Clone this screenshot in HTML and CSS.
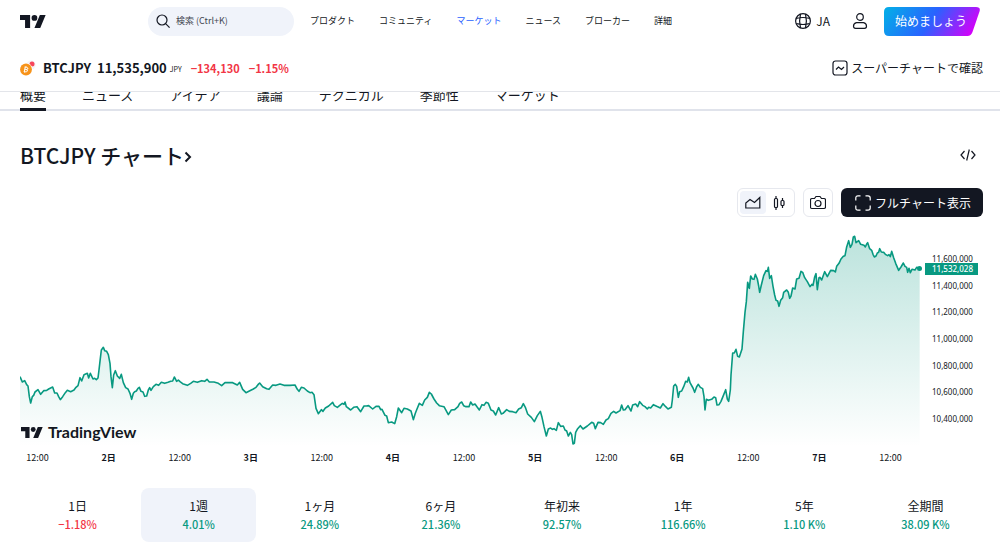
FILE: index.html
```html
<!DOCTYPE html>
<html lang="ja">
<head>
<meta charset="utf-8">
<meta name="viewport" content="width=device-width, initial-scale=1">
<title>BTCJPY チャート — TradingView</title>
<link rel="stylesheet" href="styles.css">
</head>
<body>
<svg class="sprite" aria-hidden="true">
  <symbol id="tv-mark" viewBox="0 0 36 18"><path fill="currentColor" d="M14 18H7V7H0V0h14zM28 18h-8L27.500 0h8z"/><circle cx="20" cy="4" r="4" fill="currentColor"/></symbol>
</svg>

<header class="page-header">
  <div class="topbar">
    <a class="logo" href="#" aria-label="TradingView"><svg class="logo-mark"><use href="#tv-mark"/></svg></a>
    <button class="search" type="button">
      <svg class="search-icon" viewBox="0 0 14 14"><circle cx="6" cy="6" r="5"/><path d="M9.600 9.600l4 4"/></svg>
      <span>検索 (Ctrl+K)</span>
    </button>
    <nav class="main-nav" aria-label="メイン">
      <a href="#">プロダクト</a>
      <a href="#">コミュニティ</a>
      <a class="is-current" href="#">マーケット</a>
      <a href="#">ニュース</a>
      <a href="#">ブローカー</a>
      <a href="#">詳細</a>
    </nav>
    <div class="account">
      <button class="language" type="button">
        <svg class="icon-16" viewBox="0 0 16 16"><circle cx="8" cy="8" r="7.400"/><path d="M5.500 1q-1.800 7 0 14M10.500 1q1.800 7 0 14M1.200 5.300q6.800-1.600 13.600 0M1.200 10.700q6.800 1.600 13.600 0"/></svg>
        <span>JA</span>
      </button>
      <button class="profile" type="button" aria-label="ユーザーメニュー">
        <svg class="icon-16" viewBox="0 0 16 16"><circle cx="8" cy="4" r="3.300"/><path d="M4.500 9.700h7q3 .6 3 3.600 0 2-2 2h-9q-2 0-2-2 0-3 3-3.600z"/></svg>
      </button>
      <button class="start" type="button">
        <svg class="start-shape" viewBox="0 0 96 29" preserveAspectRatio="none">
          <defs><linearGradient id="start-fill" x1="0" y1="0.300" x2="1" y2="0.500"><stop offset="0" stop-color="#06a9e9"/><stop offset="0.500" stop-color="#2962ff"/><stop offset="1" stop-color="#d500f9"/></linearGradient></defs>
          <path fill="url(#start-fill)" d="M5 0h87q5 0 3.500 4.500l-7 20.500q-1.500 4-5 4H5q-5 0-5-5V5q0-5 5-5z"/>
        </svg>
        <span>始めましょう</span>
      </button>
    </div>
  </div>

  <div class="symbolbar">
    <svg class="coin" viewBox="0 0 16 16"><circle cx="11" cy="5" r="4.600" fill="#f3f4f7"/><circle cx="12" cy="4" r="2.500" fill="#f7465b"/><circle cx="6" cy="9.500" r="6.600" fill="#fff"/><circle cx="6" cy="9.500" r="5.900" fill="#f7931a"/><path d="M4.600 7l2.200.4q1.600.5 1 1.600-.4.700-1.600.5 1.600.4 1.200 1.500-.5 1.200-2.200.8L3.700 11.400M5.200 7.200l-.8 4.200M4.800 9.200l1.600.3M6 6.300l-.2 1M4.800 11.600l-.2 1" fill="none" stroke="#fff"/></svg>
    <strong class="ticker">BTCJPY</strong>
    <span class="price">11,535,900</span>
    <span class="currency">JPY</span>
    <span class="change">−134,130</span>
    <span class="change">−1.15%</span>
    <a class="superchart" href="#">
      <svg class="icon-16" viewBox="0 0 16 16"><rect x="1" y="1" width="14" height="14" rx="2.500"/><path d="M4 9.500l2.500-2.500 3 2.500L12 7"/></svg>
      <span>スーパーチャートで確認</span>
    </a>
  </div>
</header>

<main>
  <nav class="tabs" aria-label="銘柄">
    <a class="is-active" href="#">概要</a>
    <a href="#">ニュース</a>
    <a href="#">アイデア</a>
    <a href="#">議論</a>
    <a href="#">テクニカル</a>
    <a href="#">季節性</a>
    <a href="#">マーケット</a>
  </nav>

  <section class="content">
    <div class="heading">
      <h1><a href="#">BTCJPY チャート<svg class="chevron" viewBox="0 0 8 12"><path d="M1.500 1.500L6 6l-4.500 4.500"/></svg></a></h1>
      <button class="embed" type="button" aria-label="埋め込み"><svg class="embed-icon" viewBox="0 0 16 12"><path d="M4.500 2L1 6l3.500 4M11.500 2L15 6l-3.500 4M9.300.5l-2.600 11"/></svg></button>
    </div>

    <div class="toolbar">
      <div class="chart-types">
        <button class="is-on" type="button" aria-label="エリア"><svg class="icon-16" viewBox="0 0 16 16"><path d="M.8 13V8l4.200-3.500L9.500 7.500l5.300-5V13z"/></svg></button>
        <button type="button" aria-label="ローソク足"><svg class="icon-16" viewBox="0 0 16 16"><rect x="3.500" y="3.500" width="3" height="9" rx="1"/><rect x="10" y="5.500" width="3" height="5" rx="1"/><path d="M5 1v2.500M5 12.500V15M11.500 3v2.500M11.500 10.500V13"/></svg></button>
      </div>
      <button class="snapshot" type="button" aria-label="スナップショット"><svg class="icon-16" viewBox="0 0 16 16"><path d="M2 3.500h2.500L6 1.500h4l1.500 2H14q1.500 0 1.500 1.500v7q0 1.500-1.500 1.500H2Q.5 13.500.5 12V5Q.5 3.500 2 3.500z"/><circle cx="8" cy="8.500" r="3"/></svg></button>
      <button class="full-chart" type="button">
        <svg class="icon-16" viewBox="0 0 16 16"><path d="M.8 5.500V3q0-2.200 2.200-2.200h2.500M10.500.8H13q2.200 0 2.200 2.200v2.500M15.200 10.500V13q0 2.200-2.200 2.200h-2.500M5.500 15.200H3Q.8 15.200.8 13v-2.500"/></svg>
        <span>フルチャート表示</span>
      </button>
    </div>

    <div class="chart">
      <div class="plot">
        <svg class="plot-svg" viewBox="0 0 2700 660" preserveAspectRatio="none" role="img" aria-label="BTCJPY 1週間の価格">
          <defs><linearGradient id="area-fill" gradientUnits="userSpaceOnUse" x1="0" y1="0" x2="0" y2="650"><stop offset="0" stop-color="#089981" stop-opacity="0.280"/><stop offset="1" stop-color="#089981" stop-opacity="0"/></linearGradient></defs>
          <path id="area" fill="url(#area-fill)"/>
          <path id="line" class="price-line"/>
        </svg>
        <a class="watermark" href="#"><svg class="watermark-mark"><use href="#tv-mark"/></svg><span>TradingView</span></a>
        <span class="last-dot"></span>
      </div>
      <div class="price-axis">
        <span>11,600,000</span>
        <span>11,400,000</span>
        <span>11,200,000</span>
        <span>11,000,000</span>
        <span>10,800,000</span>
        <span>10,600,000</span>
        <span>10,400,000</span>
        <b class="last-price">11,532,028</b>
      </div>
      <div class="time-axis">
        <span>12:00</span><b>2日</b><span>12:00</span><b>3日</b><span>12:00</span><b>4日</b><span>12:00</span><b>5日</b><span>12:00</span><b>6日</b><span>12:00</span><b>7日</b><span>12:00</span>
      </div>
    </div>

    <div class="ranges">
      <button type="button"><span>1日</span><span class="pct down">−1.18%</span></button>
      <button class="is-selected" type="button"><span>1週</span><span class="pct">4.01%</span></button>
      <button type="button"><span>1ヶ月</span><span class="pct">24.89%</span></button>
      <button type="button"><span>6ヶ月</span><span class="pct">21.36%</span></button>
      <button type="button"><span>年初来</span><span class="pct">92.57%</span></button>
      <button type="button"><span>1年</span><span class="pct">116.66%</span></button>
      <button type="button"><span>5年</span><span class="pct">1.10 K%</span></button>
      <button type="button"><span>全期間</span><span class="pct">38.09 K%</span></button>
    </div>
  </section>
</main>
<script src="chart.js"></script>
</body>
</html>
```

FILE: styles.css
```css
* { box-sizing: border-box; }

body {
  margin: 0;
  background: #fff;
  color: #131722;
  font-family: "Noto Sans CJK JP", "Noto Sans", sans-serif;
  font-size: 12px;
  line-height: 16px;
}

a { color: inherit; text-decoration: none; }

button {
  margin: 0;
  padding: 0;
  border: 0;
  background: none;
  color: inherit;
  font: inherit;
  cursor: pointer;
}

svg { display: block; flex: none; }
.sprite { position: absolute; width: 0; height: 0; }

.icon-16, .search-icon, .embed-icon, .chevron {
  width: 16px;
  height: 16px;
  fill: none;
  stroke: currentColor;
  stroke-width: 1.2;
}

/* Header */
.page-header {
  position: relative;
  z-index: 1;
  background: #fff;
  border-bottom: 1px solid #e3e5ea;
}

.topbar {
  display: flex;
  align-items: center;
  height: 42px;
  padding: 0 20px;
}

.logo { width: 128px; }
.logo-mark { width: 26px; height: 13px; }

.search {
  display: flex;
  align-items: center;
  gap: 6px;
  width: 146px;
  height: 29px;
  padding: 0 8px;
  border-radius: 15px;
  background: #f0f3fa;
  color: #434651;
  font-size: 9px;
}
.search-icon { width: 14px; height: 14px; color: #131722; }

.main-nav {
  display: flex;
  gap: 24px;
  margin-left: 16px;
  font-size: 9px;
  white-space: nowrap;
}
.main-nav .is-current { color: #2962ff; }

.account {
  display: flex;
  align-items: center;
  margin-left: auto;
}
.language { display: flex; align-items: center; gap: 5px; font-size: 12px; }
.profile { margin: 0 16px 0 22px; }

.start {
  position: relative;
  width: 96px;
  height: 29px;
  padding-right: 2px;
  color: #fff;
  font-size: 12px;
}
.start span { position: relative; }
.start-shape { position: absolute; inset: 0; width: 100%; height: 100%; }

.symbolbar {
  display: flex;
  align-items: center;
  height: 49px;
  padding: 2px 17px 0 20px;
  white-space: nowrap;
}
.coin { width: 16px; height: 16px; margin-right: 7px; }
.ticker { margin-right: 6px; font-size: 13px; }
.price { font-size: 13px; font-weight: 700; }
.currency { margin: 3px 9px 0 3px; font-size: 7px; }
.change { margin-right: 9px; color: #f23645; font-size: 11px; font-weight: 700; }
.superchart { display: flex; align-items: center; gap: 3px; margin-left: auto; }

.tabs {
  display: flex;
  gap: 36px;
  margin-top: -8px;
  padding: 0 20px;
  box-shadow: inset 0 -2px #e0e3eb;
  font-size: 13px;
  white-space: nowrap;
}
.tabs a {
  padding: 3px 0 5px;
  border-bottom: 3px solid transparent;
}
.tabs .is-active { border-color: #131722; }

.content { padding: 0 17px 0 20px; }

.heading {
  display: flex;
  align-items: center;
  justify-content: space-between;
  padding: 29px 7px 0 0;
}
h1 { margin: 0; font-size: 21px; font-weight: 500; line-height: 30px; }
h1 a { display: flex; align-items: center; }
.chevron { width: 8px; height: 12px; margin-top: 4px; stroke-width: 2; }
.embed-icon { height: 12px; }

.toolbar {
  display: flex;
  justify-content: flex-end;
  gap: 8px;
  margin-top: 18px;
}
.toolbar > * { height: 29px; border-radius: 6px; }
.chart-types { display: flex; padding: 2px; border: 1px solid #e6e8ee; }
.chart-types button { display: grid; place-items: center; width: 26px; border-radius: 4px; }
.chart-types .is-on { background: #f0f3fa; }
.snapshot { display: grid; place-items: center; width: 30px; border: 1px solid #e6e8ee; }
.full-chart {
  display: flex;
  align-items: center;
  gap: 4px;
  padding: 0 12px 0 14px;
  background: #131722;
  color: #fff;
}

/* Chart */
.chart {
  display: grid;
  grid-template-columns: 1fr 63px;
  margin-top: 13px;
}
.plot { position: relative; height: 220px; }
.plot-svg { width: 100%; height: 100%; }
.price-line {
  fill: none;
  stroke: #089981;
  stroke-width: 1.6;
  stroke-linejoin: round;
  vector-effect: non-scaling-stroke;
}
.last-dot {
  position: absolute;
  right: -2px;
  top: 36px;
  width: 5px;
  height: 5px;
  border-radius: 50%;
  background: #089981;
}
.watermark {
  position: absolute;
  left: 1px;
  bottom: 8px;
  display: flex;
  align-items: center;
  gap: 5px;
  font-family: Lato, sans-serif;
  font-size: 16px;
  font-weight: 700;
  line-height: 20px;
}
.watermark-mark { width: 22px; height: 11px; }

.price-axis {
  position: relative;
  display: grid;
  grid-template-rows: repeat(7, 1fr);
  align-items: center;
  padding: 16px 0 18px 12px;
  font-family: "Noto Sans", sans-serif;
  font-size: 8px;
  line-height: 8px;
}
.last-price {
  position: absolute;
  left: 5px;
  top: 33px;
  padding: 0 5px 0 7px;
  background: #089981;
  color: #fff;
  font-weight: 500;
  line-height: 12px;
}
.time-axis {
  display: grid;
  grid-template-columns: repeat(13, 1fr);
  margin: 0 -6px 0 -18px;
  font-size: 9px;
  text-align: center;
}

/* Ranges */
.ranges {
  display: grid;
  grid-template-columns: repeat(8, 1fr);
  gap: 6px;
  margin-top: 22px;
}
.ranges button {
  display: flex;
  flex-direction: column;
  align-items: center;
  gap: 2px;
  padding: 10px 0;
  border-radius: 8px;
}
.ranges .is-selected { background: #f0f3fa; }
.pct { color: #089981; font-size: 11px; font-weight: 500; }
.down { color: #f23645; }
```

FILE: chart.js
```js
// Week of prices as x,y pairs in the plot's 2700 x 660 coordinate space.
const points = `0,440 7,456 14,452 20,464 24,468 28,500 32,519 37,500 41,496 45,486 54,479 62,493 71,482 80,481 86,477 98,471 104,489 111,489 116,500 121,509 128,500 136,488 142,481 152,485 162,480 168,472 174,467 180,443 185,453 192,434 202,430 206,444 211,430 219,447 224,445 229,449 234,444 237,420 241,385 244,360 250,352 254,362 260,364 265,374 270,400 273,440 277,473 281,435 286,422 292,438 299,445 304,433 310,458 317,473 324,477 330,490 335,508 340,490 344,485 349,483 354,475 358,472 363,484 369,486 374,499 380,498 385,480 389,473 393,481 400,470 408,463 416,466 424,457 434,460 444,457 452,454 458,453 463,441 470,454 475,450 480,455 488,461 502,466 512,460 520,454 532,457 545,452 554,454 561,448 568,456 582,456 595,460 605,467 615,458 638,458 652,465 659,457 668,478 678,488 688,483 700,477 708,472 714,464 719,459 728,470 740,476 747,478 758,465 768,466 780,462 792,466 810,466 825,465 832,478 837,484 844,472 852,474 862,483 870,488 876,487 882,494 888,535 895,551 904,539 909,544 916,534 926,528 938,517 943,527 952,532 962,524 967,520 972,523 975,516 979,530 992,540 1001,532 1011,530 1022,545 1032,528 1039,528 1046,527 1058,537 1068,529 1077,529 1082,539 1086,538 1095,556 1100,558 1105,578 1115,576 1124,581 1130,560 1135,534 1145,548 1152,535 1162,537 1173,543 1180,569 1186,550 1191,537 1198,520 1207,526 1214,510 1222,502 1228,487 1234,492 1242,507 1250,519 1258,527 1272,530 1285,554 1294,540 1304,539 1314,530 1319,520 1325,516 1331,527 1338,530 1347,530 1352,516 1358,525 1365,522 1372,532 1378,540 1386,524 1392,526 1398,517 1405,520 1413,540 1420,543 1427,555 1436,533 1444,552 1449,550 1460,539 1468,544 1478,545 1488,548 1496,537 1504,533 1510,521 1516,532 1523,552 1534,562 1543,575 1552,557 1561,544 1566,562 1572,590 1579,618 1585,597 1592,594 1597,598 1602,596 1609,601 1615,578 1622,589 1630,588 1635,600 1640,603 1645,618 1651,607 1655,614 1659,642 1663,640 1667,607 1673,596 1681,587 1689,597 1702,588 1715,577 1721,580 1726,596 1734,577 1742,578 1750,583 1758,570 1765,566 1773,550 1781,544 1788,549 1800,542 1805,525 1810,540 1815,539 1824,527 1833,543 1838,525 1847,522 1853,530 1859,515 1868,526 1875,530 1882,537 1886,532 1892,534 1900,524 1910,529 1921,534 1929,521 1937,530 1944,537 1954,532 1957,510 1961,468 1966,463 1970,469 1975,502 1979,485 1985,483 1991,470 1997,454 2002,456 2006,442 2010,458 2019,474 2024,487 2030,470 2035,463 2041,472 2048,476 2052,500 2055,540 2059,508 2065,511 2075,508 2082,501 2087,503 2091,525 2097,524 2103,514 2110,497 2117,479 2122,507 2126,514 2131,480 2133,435 2138,369 2143,369 2148,358 2153,379 2158,381 2166,357 2170,305 2175,247 2179,215 2183,157 2188,175 2192,138 2197,147 2202,148 2206,133 2212,147 2216,168 2219,187 2224,165 2231,137 2238,122 2242,124 2245,112 2249,145 2254,137 2259,169 2264,195 2268,211 2273,213 2277,229 2282,211 2288,203 2291,187 2300,180 2305,187 2309,205 2313,198 2318,174 2325,177 2330,147 2337,145 2343,124 2348,127 2354,143 2362,155 2370,170 2376,163 2379,166 2384,141 2388,131 2392,179 2397,143 2400,142 2405,150 2414,125 2422,140 2432,121 2441,122 2446,126 2450,109 2457,100 2463,87 2470,79 2475,77 2480,51 2486,32 2491,52 2496,43 2500,21 2504,19 2508,38 2516,32 2522,43 2532,46 2536,51 2540,42 2543,38 2549,56 2555,61 2559,73 2563,81 2568,78 2572,69 2576,67 2579,56 2584,66 2591,67 2596,73 2603,77 2607,74 2611,80 2615,64 2621,83 2627,100 2636,121 2643,111 2650,99 2655,109 2660,112 2663,127 2667,115 2671,128 2676,118 2685,120 2690,112 2699,114`;

const path = "M" + points.split(" ").join("L");
document.getElementById("line").setAttribute("d", path);
document.getElementById("area").setAttribute("d", path + "V660H0Z");
```
